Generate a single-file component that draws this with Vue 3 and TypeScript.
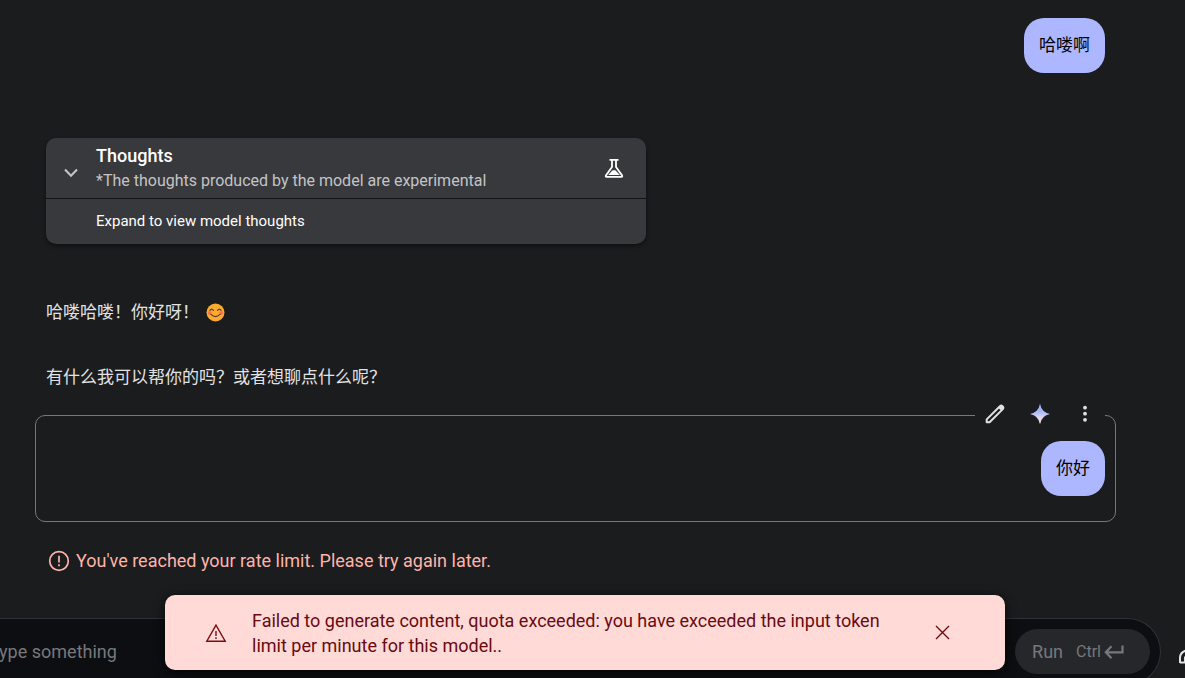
<script setup lang="ts">
import { ref } from 'vue'

const prompt = ref('')
const toastOpen = ref(true)
const replies: string[] = ['哈喽哈喽！你好呀！', '有什么我可以帮你的吗？或者想聊点什么呢？']
</script>

<template>
  <div class="page">
    <main class="chat">
      <div class="user-turn">
        <p class="bubble">哈喽啊</p>
      </div>

      <section class="thoughts">
        <header class="thoughts-head">
          <button class="icon-button chevron" type="button" aria-label="Expand thoughts">
            <svg width="16" height="10" viewBox="0 0 16 10" fill="none" stroke="#c4c5c9" stroke-width="2">
              <path d="M2 1.5 8 7.8 14 1.5" />
            </svg>
          </button>
          <div class="thoughts-titles">
            <h2>Thoughts</h2>
            <p>*The thoughts produced by the model are experimental</p>
          </div>
          <svg class="flask" width="20" height="20" viewBox="0 0 20 20" aria-hidden="true">
            <path d="M5.500 1.900h9M8 2v7L1.900 17.500q-.6 1.400.8 1.400h14.600q1.400 0 .8-1.400L12 9V2" fill="none" stroke="#fff" stroke-width="1.800" />
            <path d="M4.200 17 8.600 12.300h2.800l4.400 4.700z" fill="#fff" />
          </svg>
        </header>
        <p class="thoughts-body">Expand to view model thoughts</p>
      </section>

      <article class="reply">
        <p>
          {{ replies[0] }}
          <svg class="emoji" width="19" height="19" viewBox="0 0 19 19" role="img" aria-label="Smiling face">
            <circle cx="9.500" cy="9.500" r="9" fill="#fcab30" />
            <circle cx="3.800" cy="10" r="1.900" fill="#ff7044" />
            <circle cx="15.200" cy="10" r="1.900" fill="#ff7044" />
            <path d="M4 7.400Q5.600 4.800 7.400 7.400M11.600 7.400Q13.400 4.800 15 7.400M5 11.400Q9.500 15.800 14 11.400" fill="none" stroke="#5a3b28" stroke-width="1.200" stroke-linecap="round" />
          </svg>
        </p>
        <p>{{ replies[1] }}</p>
      </article>

      <section class="selected-turn">
        <div class="turn-actions">
          <button class="icon-button" type="button" aria-label="Edit">
            <svg width="20" height="20" viewBox="0 0 20 20" fill="none" stroke="#e0e1e3" stroke-linejoin="round">
              <path d="M1.700 18.300v-2.900L14.900 2.200q1.200-1 2.300-.2l.8.8q.8 1.100-.2 2.300L4.600 18.300z" stroke-width="2" />
              <path d="m13.200 3.800 3 3 2-2q.9-1.200 0-2.200l-.8-.8q-1-.9-2.200 0z" fill="#e0e1e3" stroke="none" />
            </svg>
          </button>
          <button class="icon-button" type="button" aria-label="Regenerate">
            <svg width="20" height="22" viewBox="0 0 20 22">
              <defs>
                <linearGradient id="spark" x1="0" y1="0" x2="0" y2="1">
                  <stop offset="0.200" stop-color="#9db2fb" />
                  <stop offset="0.550" stop-color="#c0c7f5" />
                  <stop offset="0.850" stop-color="#ecdcda" />
                </linearGradient>
              </defs>
              <path d="M10 .8Q11.600 9.400 20 11 11.600 12.600 10 21.200 8.400 12.600 0 11 8.400 9.400 10 .8z" fill="url(#spark)" />
              <path d="M10 5Q12 9 15.500 11 12 13 10 17 8 13 4.500 11 8 9 10 5z" fill="url(#spark)" />
            </svg>
          </button>
          <button class="icon-button" type="button" aria-label="More options">
            <svg width="20" height="20" viewBox="0 0 20 20" fill="#e0e1e3">
              <circle cx="10" cy="3.700" r="1.900" />
              <circle cx="10" cy="9.700" r="1.900" />
              <circle cx="10" cy="15.800" r="1.900" />
            </svg>
          </button>
        </div>
        <p class="bubble">你好</p>
      </section>

      <p class="error" role="alert">
        <svg width="22" height="22" viewBox="0 0 22 22" fill="none" stroke="#ffb4ab">
          <circle cx="11" cy="11" r="9.300" stroke-width="1.700" />
          <path d="M11 5.800v6.700M11 14.200v2" stroke-width="1.700" />
        </svg>
        You've reached your rate limit. Please try again later.
      </p>
    </main>

    <footer class="dock">
      <form class="composer" @submit.prevent>
        <input v-model="prompt" type="text" placeholder="Type something" aria-label="Type something" />
        <button class="run" type="submit">
          <span>Run</span>
          <span class="shortcut">Ctrl</span>
          <svg width="20" height="14" viewBox="0 0 20 14" fill="none" stroke="currentColor" stroke-width="2.200">
            <path d="M18.500 .5v6.800H2M7.500 1.300 1.800 7.300l5.700 5.900" />
          </svg>
        </button>
      </form>
      <button class="icon-button help" type="button" aria-label="Audio">
        <svg width="20" height="20" viewBox="0 0 20 20" fill="none" stroke="#e2e2e5" stroke-width="2">
          <path d="M1 15V9.500Q1.500 3 10 2q8.500 1 9 7.500V15h-4V9.500h4M1 14.500h5V8.500" />
        </svg>
      </button>
    </footer>

    <div v-if="toastOpen" class="toast" role="status">
      <svg class="toast-icon" width="22" height="20" viewBox="0 0 22 20" fill="none" stroke="#7a0c14" stroke-width="1.400">
        <path d="M11 2.200 1.800 18.200h18.400z" />
        <path d="M11 8v5M11 14.300v1.600" />
      </svg>
      <p>Failed to generate content, quota exceeded: you have exceeded the input token limit per minute for this model..</p>
      <button class="icon-button" type="button" aria-label="Dismiss" @click="toastOpen = false">
        <svg width="15" height="15" viewBox="0 0 15 15" fill="none" stroke="#730a12" stroke-width="1.400">
          <path d="m1 1 13 13M14 1 1 14" />
        </svg>
      </button>
    </div>
  </div>
</template>

<style>
body {
  background: #1b1c1d;
  overflow: hidden;
}
</style>

<style scoped>
* {
  box-sizing: border-box;
}

.page {
  position: relative;
  height: 100vh;
  overflow: hidden;
  background: #1b1c1d;
  color: #e2e2e5;
  font-family: Roboto, "Noto Sans CJK SC", sans-serif;
  font-size: 18px;
  line-height: 25px;
}

h2,
p {
  margin: 0;
}

.icon-button {
  display: grid;
  place-items: center;
  padding: 0;
  border: 0;
  background: none;
}

.chat {
  padding: 18px 69px 0 35px;
}

.user-turn {
  display: flex;
  justify-content: flex-end;
  padding-right: 11px;
}

.bubble {
  padding: 15px;
  border-radius: 20px;
  background: #adb7ff;
  color: #000;
  font-size: 17px;
}

.thoughts {
  max-width: 600px;
  margin: 65px 0 0 11px;
  border-radius: 10px;
  background: #38393c;
  box-shadow: 0 2px 4px #0007;
  color: #fff;
}

.thoughts-head {
  display: flex;
  align-items: center;
  height: 61px;
  padding: 0 22px 0 0;
  border-bottom: 1px solid #141516;
}

.chevron {
  width: 50px;
  height: 50px;
  padding-top: 10px;
}

.thoughts-titles {
  flex: 1;
}

.thoughts-titles h2 {
  font-size: 18px;
  font-weight: 500;
}

.thoughts-titles p {
  color: #c3c4c7;
  font-size: 16px;
}

.thoughts-body {
  padding: 10px 50px;
  font-size: 15px;
}

.reply {
  display: grid;
  gap: 40px;
  margin: 56px 0 0 11px;
  font-size: 17px;
}

.emoji {
  margin-left: 3px;
  vertical-align: -4px;
}

.selected-turn {
  position: relative;
  display: flex;
  justify-content: flex-end;
  margin-top: 25px;
  padding: 25px 10px;
  border: 1px solid #77787c;
  border-radius: 10px;
}

.turn-actions {
  position: absolute;
  top: -24px;
  right: 10px;
  display: flex;
  gap: 5px;
  background: #1b1c1d;
}

.turn-actions .icon-button {
  width: 40px;
  height: 44px;
}

.error {
  display: flex;
  align-items: center;
  gap: 6px;
  margin: 26px 0 0 13px;
  color: #ffb4ab;
}

.dock {
  display: flex;
  align-items: center;
  gap: 18px;
  margin: 45px -14px 0 -25px;
}

.composer {
  display: flex;
  flex: 1;
  align-items: center;
  padding: 10px;
  border: 1px solid #303134;
  border-left: 0;
  border-radius: 0 34px 34px 0;
  background: #0d0e11;
}

.composer input {
  flex: 1;
  min-width: 0;
  padding: 0 4px;
  border: 0;
  outline: 0;
  background: none;
  color: #e2e2e5;
  font: inherit;
}

.composer input::placeholder {
  color: #77787b;
  opacity: 1;
}

.run {
  display: flex;
  align-items: center;
  height: 45px;
  padding: 0 26px 0 17px;
  border: 0;
  border-radius: 23px;
  background: #26272a;
  color: #77787b;
  font: inherit;
}

.shortcut {
  margin: 0 3px 0 13px;
  font-size: 16px;
}

.help {
  padding-top: 12px;
}

.toast {
  position: absolute;
  top: 595px;
  right: 15px;
  left: 0;
  display: flex;
  align-items: center;
  width: 840px;
  max-width: 90%;
  min-height: 75px;
  margin: 0 auto;
  padding: 12px 40px;
  border-radius: 10px;
  background: #ffdad6;
  box-shadow: 0 3px 12px #000c;
  color: #690a12;
}

.toast-icon {
  flex: none;
  margin-right: 25px;
}

.toast p {
  flex: 1;
  padding-right: 28px;
}

.toast .icon-button {
  width: 45px;
  height: 45px;
}
</style>
